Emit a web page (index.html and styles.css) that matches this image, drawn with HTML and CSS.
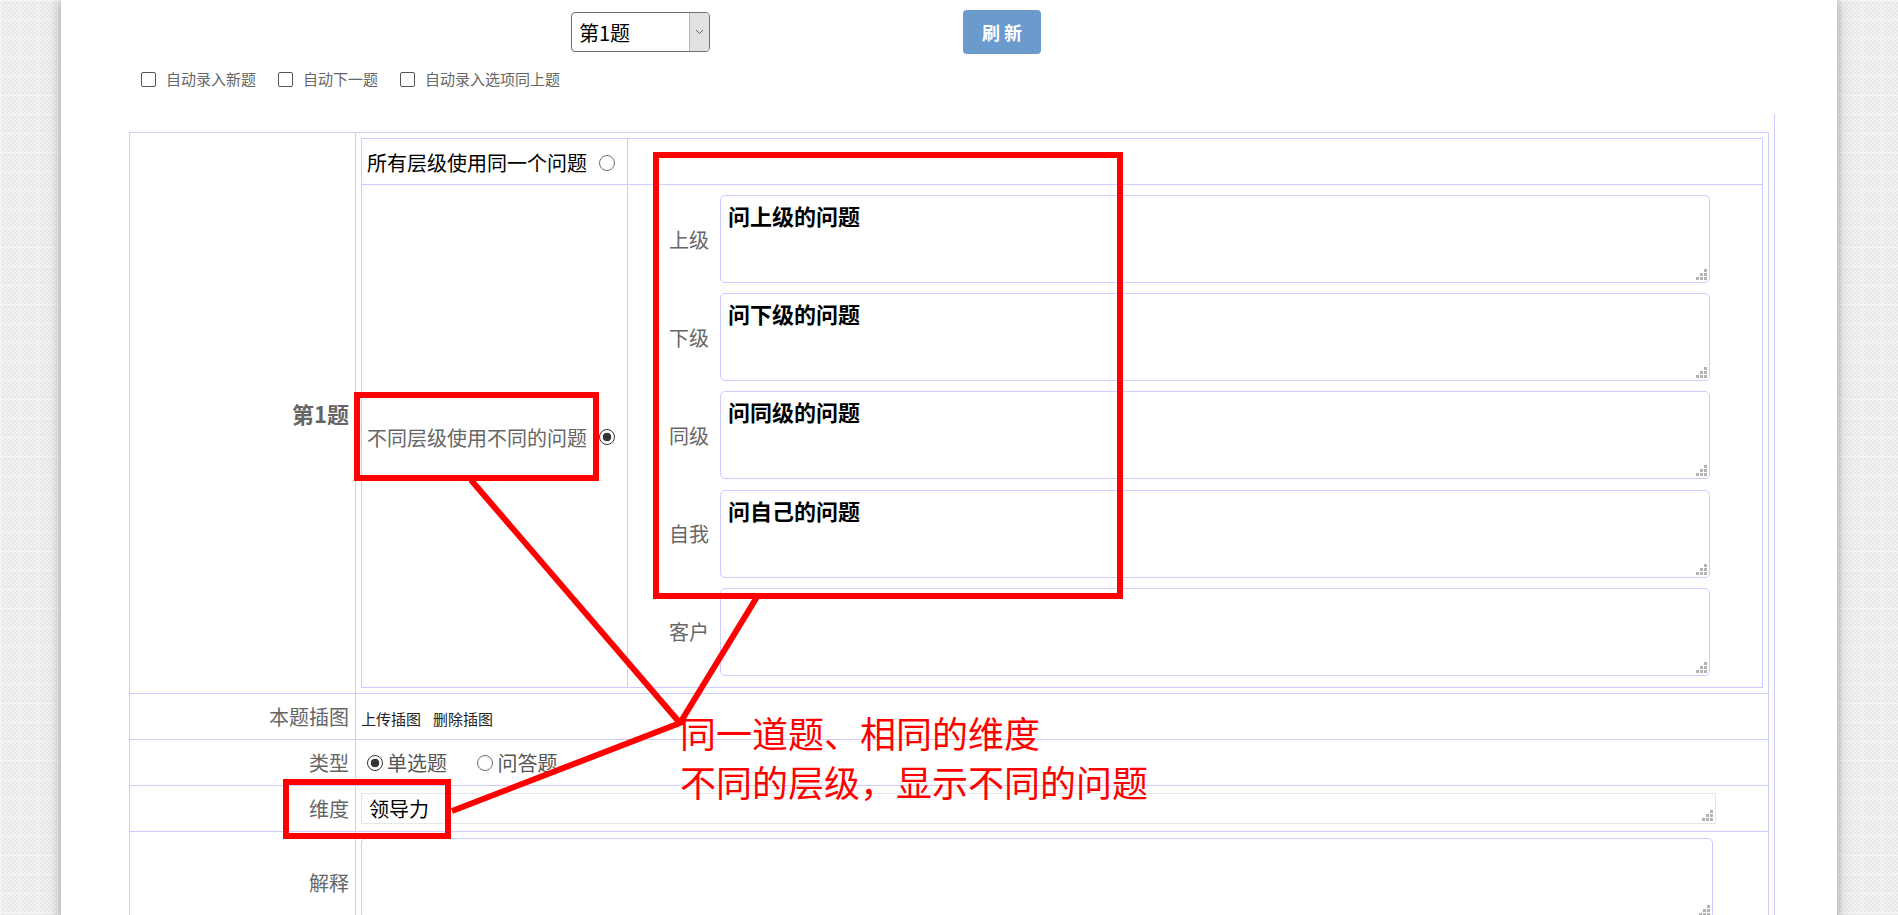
FILE: index.html
```html
<!DOCTYPE html>
<html>
<head lang="zh">
	<meta charset="UTF-8">
	<title>题目编辑</title>
	<link rel="stylesheet" href="styles.css">
</head>
<body>

<div class="page">

	<div class="toolbar">
		<span class="select-wrap">
			<select class="q-select">
				<option>第1题</option>
			</select>
			<span class="select-arrow">
				<svg width="9" height="6" viewBox="0 0 9 6"><path d="M1 1 L4.5 4.5 L8 1" fill="none" stroke="#666" stroke-width="1"/></svg>
			</span>
		</span>
		<button class="btn-refresh">刷 新</button>
	</div>

	<div class="options">
		<label class="opt"><input type="checkbox" class="chk">自动录入新题</label>
		<label class="opt"><input type="checkbox" class="chk">自动下一题</label>
		<label class="opt"><input type="checkbox" class="chk">自动录入选项同上题</label>
	</div>

	<div class="form-wrap">
		<table class="q-table">
			<colgroup>
				<col class="col-label">
				<col>
			</colgroup>
			<tr>
				<td class="cell-label cell-title">第1题</td>
				<td class="cell-main">
					<table class="level-table">
						<colgroup>
							<col class="col-mode">
							<col>
						</colgroup>
						<tr>
							<td class="mode"><span>所有层级使用同一个问题</span><input type="radio" name="mode" class="rad"></td>
							<td></td>
						</tr>
						<tr>
							<td class="mode mode-diff"><span>不同层级使用不同的问题</span><input type="radio" name="mode" class="rad" checked></td>
							<td class="levels">
								<div class="level-grid">
									<span class="level-name">上级</span>
									<div class="ta-box"><textarea class="ta ta-level">问上级的问题</textarea><svg class="grip" width="11" height="11" viewBox="0 0 11 11"><path d="M8 0h3v3H8zM4 4h3v3H4zM8 4h3v3H8zM0 8h3v3H0zM4 8h3v3H4zM8 8h3v3H8z" fill="#b3b3b3"/></svg></div>
									<span class="level-name">下级</span>
									<div class="ta-box"><textarea class="ta ta-level">问下级的问题</textarea><svg class="grip" width="11" height="11" viewBox="0 0 11 11"><path d="M8 0h3v3H8zM4 4h3v3H4zM8 4h3v3H8zM0 8h3v3H0zM4 8h3v3H4zM8 8h3v3H8z" fill="#b3b3b3"/></svg></div>
									<span class="level-name">同级</span>
									<div class="ta-box"><textarea class="ta ta-level">问同级的问题</textarea><svg class="grip" width="11" height="11" viewBox="0 0 11 11"><path d="M8 0h3v3H8zM4 4h3v3H4zM8 4h3v3H8zM0 8h3v3H0zM4 8h3v3H4zM8 8h3v3H8z" fill="#b3b3b3"/></svg></div>
									<span class="level-name">自我</span>
									<div class="ta-box"><textarea class="ta ta-level">问自己的问题</textarea><svg class="grip" width="11" height="11" viewBox="0 0 11 11"><path d="M8 0h3v3H8zM4 4h3v3H4zM8 4h3v3H8zM0 8h3v3H0zM4 8h3v3H4zM8 8h3v3H8z" fill="#b3b3b3"/></svg></div>
									<span class="level-name">客户</span>
									<div class="ta-box"><textarea class="ta ta-level"></textarea><svg class="grip" width="11" height="11" viewBox="0 0 11 11"><path d="M8 0h3v3H8zM4 4h3v3H4zM8 4h3v3H8zM0 8h3v3H0zM4 8h3v3H4zM8 8h3v3H8z" fill="#b3b3b3"/></svg></div>
								</div>
							</td>
						</tr>
					</table>
				</td>
			</tr>
			<tr class="row-line">
				<td class="cell-label">本题插图</td>
				<td class="cell-field"><a class="link">上传插图</a><a class="link">删除插图</a></td>
			</tr>
			<tr class="row-line">
				<td class="cell-label">类型</td>
				<td class="cell-field">
					<label class="type-opt"><input type="radio" name="type" class="rad" checked>单选题</label>
					<label class="type-opt"><input type="radio" name="type" class="rad">问答题</label>
				</td>
			</tr>
			<tr class="row-line">
				<td class="cell-label">维度</td>
				<td class="cell-field">
					<div class="ta-box ta-box-dim"><textarea class="ta ta-dim">领导力</textarea><svg class="grip" width="11" height="11" viewBox="0 0 11 11"><path d="M8 0h3v3H8zM4 4h3v3H4zM8 4h3v3H8zM0 8h3v3H0zM4 8h3v3H4zM8 8h3v3H8z" fill="#b3b3b3"/></svg></div>
				</td>
			</tr>
			<tr>
				<td class="cell-label">解释</td>
				<td class="cell-field cell-explain">
					<div class="ta-box ta-box-explain"><textarea class="ta ta-explain"></textarea><svg class="grip" width="11" height="11" viewBox="0 0 11 11"><path d="M8 0h3v3H8zM4 4h3v3H4zM8 4h3v3H8zM0 8h3v3H0zM4 8h3v3H4zM8 8h3v3H8z" fill="#b3b3b3"/></svg></div>
				</td>
			</tr>
		</table>
	</div>

</div>

<!-- annotation layer drawn over the screenshot -->
<svg class="annot" width="1898" height="915" viewBox="0 0 1898 915">
	<g fill="none" stroke="#ff0000" stroke-width="6">
		<rect x="656" y="155" width="464" height="441"/>
		<rect x="357" y="395" width="239" height="83"/>
		<rect x="286" y="782" width="162" height="54"/>
		<polyline points="471,480 680,723 452,811"/>
		<line x1="757" y1="597" x2="680" y2="723"/>
	</g>
</svg>
<div class="annot-text">同一道题、相同的维度<br>不同的层级，显示不同的问题</div>

</body>
</html>
```

FILE: styles.css
```css
* {
	margin: 0;
	padding: 0;
	box-sizing: border-box;
}
html, body {
	height: 100%;
	overflow: hidden;
}
body {
	font-family: "Noto Sans CJK SC", "Microsoft YaHei", sans-serif;
	background-color: #ececec;
	background-image:
		linear-gradient(rgba(255, 255, 255, 0.45) 1px, transparent 1px),
		linear-gradient(90deg, rgba(255, 255, 255, 0.45) 1px, transparent 1px),
		repeating-conic-gradient(#e8e8e8 0 25%, #f1f1f1 0 50%);
	background-size: 19px 19px, 19px 19px, 4px 4px;
}
.page {
	width: 1776px;
	min-height: 100%;
	margin: 0 auto;
	background: #ffffff;
	box-shadow: 0 0 12px rgba(0, 0, 0, 0.35);
}

/* top bar */
.toolbar {
	display: flex;
	align-items: flex-start;
	padding: 10px 0 0 510px;
}
.select-wrap {
	position: relative;
	display: inline-block;
	margin-top: 2px;
}
.q-select {
	appearance: none;
	-webkit-appearance: none;
	width: 139px;
	height: 40px;
	border: 1px solid #707070;
	border-radius: 4px;
	background: #ffffff;
	padding: 0 0 0 7px;
	font-family: "Noto Sans CJK SC", sans-serif;
	font-size: 20px;
	color: #000000;
	outline: none;
}
.select-arrow {
	position: absolute;
	top: 1px;
	right: 1px;
	width: 20px;
	height: 38px;
	background: #e1e1e1;
	border-left: 1px solid #b5b5b5;
	border-radius: 0 3px 3px 0;
	display: flex;
	align-items: center;
	justify-content: center;
}
.btn-refresh {
	margin-left: 253px;
	width: 78px;
	height: 44px;
	border: 0;
	border-radius: 4px;
	background: #6a9bcc;
	color: #ffffff;
	font-family: "Noto Sans CJK SC", sans-serif;
	font-size: 18px;
	font-weight: 700;
	cursor: pointer;
}

/* checkbox options */
.options {
	display: flex;
	align-items: center;
	gap: 22px;
	margin-top: 14px;
	padding-left: 80px;
	height: 22px;
}
.opt {
	display: flex;
	align-items: center;
	font-size: 15px;
	line-height: 22px;
	color: #666666;
}
.chk {
	appearance: none;
	-webkit-appearance: none;
	width: 15px;
	height: 15px;
	border: 1px solid #555555;
	border-radius: 2px;
	background: #ffffff;
	margin-right: 10px;
}

/* form table */
.form-wrap {
	width: 1714px;
	margin-top: 24px;
	padding: 18px 0 0 68px;
	border-right: 1px solid #ccccff;
	min-height: 820px;
}
.q-table {
	width: 1640px;
	border-collapse: collapse;
	table-layout: fixed;
}
.col-label {
	width: 226px;
}
.q-table > tbody > tr > td {
	border: 1px solid #ccccff;
}
.cell-label {
	text-align: right;
	vertical-align: middle;
	padding-right: 6px;
	font-size: 20px;
	color: #666666;
}
.cell-title {
	font-size: 22px;
	font-weight: 700;
}
.cell-main {
	padding: 5px;
}
.row-line > td {
	height: 46px;
}
.cell-field {
	padding: 0 5px;
	vertical-align: middle;
	font-size: 20px;
	color: #555555;
}
.cell-explain {
	vertical-align: top;
	padding: 6px 5px 15px;
}

/* level table */
.level-table {
	width: 100%;
	border-collapse: collapse;
	table-layout: fixed;
}
.col-mode {
	width: 266px;
}
.level-table td {
	border: 1px solid #ccccff;
}
.mode {
	height: 46px;
	padding-left: 5px;
	font-size: 20px;
	color: #000000;
	vertical-align: middle;
	white-space: nowrap;
}
.mode > span {
	vertical-align: middle;
}
.mode-diff {
	color: #666666;
}
.mode .rad {
	margin-left: 12px;
}
.rad {
	appearance: none;
	-webkit-appearance: none;
	width: 16px;
	height: 16px;
	border: 1px solid #6f6f6f;
	border-radius: 50%;
	background: #ffffff;
	vertical-align: middle;
}
.rad:checked {
	border-color: #333333;
	background: radial-gradient(circle, #333333 0, #333333 4px, #ffffff 4.6px);
}
.levels {
	padding: 10px 0 11px;
	vertical-align: top;
}
.level-grid {
	display: grid;
	grid-template-columns: 81px 990px;
	column-gap: 11px;
	row-gap: 10.2px;
	align-items: center;
}
.level-name {
	text-align: right;
	font-size: 20px;
	color: #666666;
}

/* textareas */
.ta-box {
	position: relative;
	height: 88px;
}
.ta {
	display: block;
	width: 100%;
	height: 100%;
	resize: none;
	outline: none;
	border: 1px solid #ccccff;
	border-radius: 5px;
	background: #ffffff;
	font-family: "Noto Sans CJK SC", sans-serif;
	color: #000000;
}
.ta-level {
	padding: 5px 7px;
	font-size: 22px;
	line-height: 28px;
	font-weight: 700;
}
.grip {
	position: absolute;
	right: 3px;
	bottom: 3px;
}
.ta-box-dim {
	width: 1355px;
	height: 31px;
}
.ta-dim {
	border-color: #e6e6e6;
	border-radius: 0;
	padding: 0 7px;
	font-size: 20px;
	line-height: 29px;
}
.ta-box-explain {
	width: 1352px;
	height: 81px;
}

/* links and type options */
.link {
	font-size: 15px;
	color: #222222;
	text-decoration: none;
	cursor: pointer;
	margin-right: 12px;
}
.type-opt {
	display: inline-flex;
	align-items: center;
	margin-right: 26px;
	color: #555555;
}
.type-opt .rad {
	margin: 0 4px 0 6px;
}
.type-opt + .type-opt .rad {
	margin-left: 0;
}

/* annotation overlay */
.annot {
	position: absolute;
	top: 0;
	left: 0;
	pointer-events: none;
}
.annot-text {
	position: absolute;
	top: 708px;
	left: 680px;
	font-size: 36px;
	line-height: 49px;
	color: #ff0000;
	white-space: nowrap;
}
```
